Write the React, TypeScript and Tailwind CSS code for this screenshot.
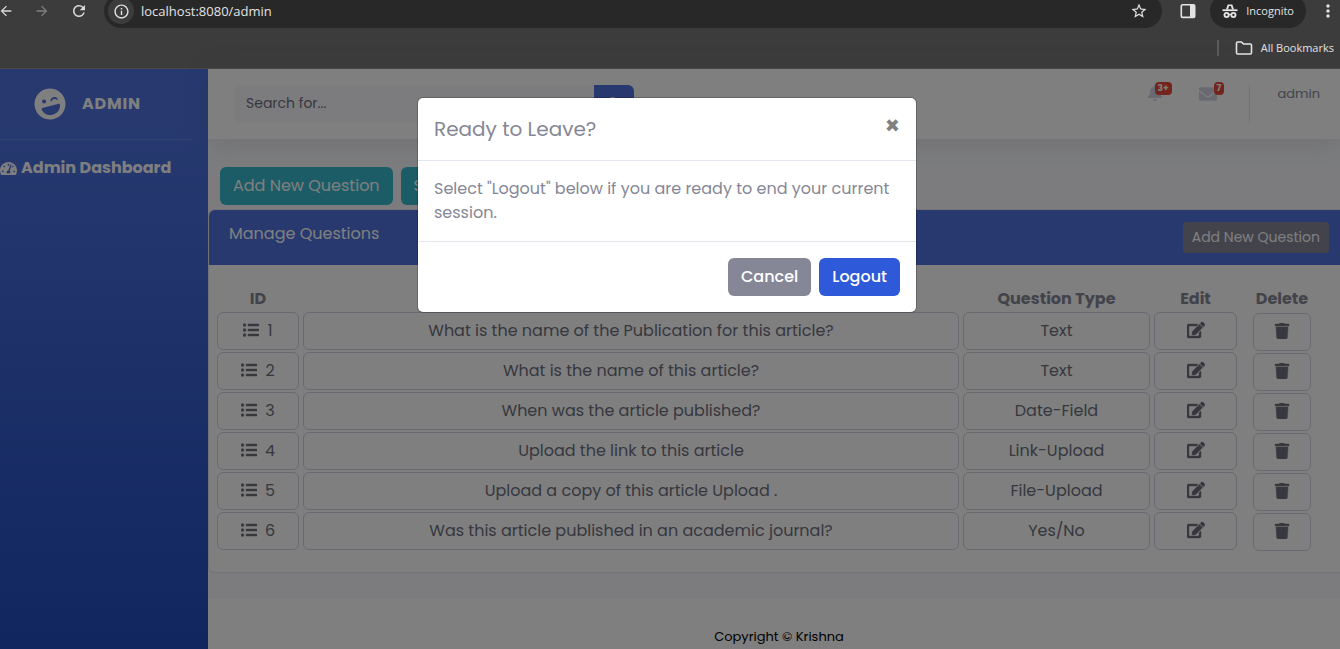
import type { ReactNode } from "react";
import {
  FaBell,
  FaEdit,
  FaEnvelope,
  FaLaughWink,
  FaListUl,
  FaSearch,
  FaTachometerAlt,
  FaTrash,
} from "react-icons/fa";
import {
  MdArrowBack,
  MdArrowForward,
  MdInfoOutline,
  MdMoreVert,
  MdRefresh,
  MdStarBorder,
} from "react-icons/md";

const questions = [
  { id: 1, text: "What is the name of the Publication for this article?", type: "Text" },
  { id: 2, text: "What is the name of this article?", type: "Text" },
  { id: 3, text: "When was the article published?", type: "Date-Field" },
  { id: 4, text: "Upload the link to this article", type: "Link-Upload" },
  { id: 5, text: "Upload a copy of this article Upload .", type: "File-Upload" },
  { id: 6, text: "Was this article published in an academic journal?", type: "Yes/No" },
];

function IncognitoIcon() {
  return (
    <svg width="16" height="16" viewBox="0 0 16 16" fill="none" stroke="currentColor" aria-hidden="true">
      <path d="M4.200 6.600V5.800L5.700 1.400H10.300L11.800 5.800V6.600H10L8.900 3H7.100L6 6.600Z" fill="currentColor" stroke="none" />
      <path d="M.5 7.200h15" strokeWidth="1.8" />
      <circle cx="4.600" cy="12" r="2.100" strokeWidth="1.900" />
      <circle cx="11.400" cy="12" r="2.100" strokeWidth="1.900" />
      <path d="M6.800 11.800c.8-.5 1.600-.5 2.400 0" strokeWidth="1.300" />
    </svg>
  );
}

function SidePanelIcon() {
  return (
    <svg width="16" height="16" viewBox="0 0 16 16" aria-hidden="true">
      <rect x="1.300" y="1.800" width="13.400" height="12.600" rx="1.200" fill="none" stroke="currentColor" strokeWidth="1.600" />
      <path d="M10 1.500h4v13.200h-4z" fill="currentColor" />
    </svg>
  );
}

function FolderIcon() {
  return (
    <svg width="18" height="14" viewBox="0 0 18 14" fill="none" stroke="currentColor" strokeWidth="1.600" aria-hidden="true">
      <path d="M1.500 2.200C1.500 1.500 2 1 2.700 1H6.500L8.500 3H15.300C16 3 16.500 3.500 16.500 4.200V11.800C16.500 12.500 16 13 15.300 13H2.700C2 13 1.500 12.500 1.500 11.800Z" />
    </svg>
  );
}

function BrowserBar() {
  return (
    <header className="h-[69px] shrink-0 overflow-hidden border-b border-[#4a4a4a] bg-[#3c3c3c] font-['Open_Sans',sans-serif] text-[#e3e3e3]">
      <div className="-mt-1.5 flex h-[34px] items-center">
        <div className="flex w-[104px] shrink-0 items-center gap-5 text-[#dadada]">
          <button aria-label="Back" className="-ml-0.5">
            <MdArrowBack size={16} />
          </button>
          <button aria-label="Forward" className="text-[#808080]">
            <MdArrowForward size={16} />
          </button>
          <button aria-label="Reload">
            <MdRefresh size={18} />
          </button>
        </div>
        <div className="flex h-full flex-1 items-center rounded-full bg-[#282828] pr-3.5 pl-1">
          <button aria-label="Site information" className="flex size-[26px] items-center justify-center rounded-full bg-[#3c3c3c]">
            <MdInfoOutline size={17} />
          </button>
          <input
            aria-label="Address"
            defaultValue="localhost:8080/admin"
            className="ml-[7px] min-w-0 flex-1 bg-transparent pt-0.5 text-[13px] outline-none"
          />
          <button aria-label="Bookmark this page">
            <MdStarBorder size={18} />
          </button>
        </div>
        <button aria-label="Side panel" className="mr-3.5 ml-[18px]">
          <SidePanelIcon />
        </button>
        <button className="flex h-full items-center gap-2 rounded-full bg-[#282828] px-3 text-[11px] font-medium">
          <IncognitoIcon />
          Incognito
        </button>
        <button aria-label="More" className="mr-0.5 ml-3 shrink-0">
          <MdMoreVert size={20} />
        </button>
      </div>
      <div className="flex h-10 items-center justify-end pr-1.5 text-[11px]">
        <span className="mr-4 h-4 w-0.5 bg-[#5c5c5c]" />
        <button className="flex items-center gap-2">
          <FolderIcon />
          All Bookmarks
        </button>
      </div>
    </header>
  );
}

function Sidebar() {
  return (
    <nav className="w-52 shrink-0 bg-linear-to-b from-[#4e73df] from-10% to-[#224abe] text-white">
      <a href="#admin" className="flex h-[70px] items-center gap-4 pl-[34px] text-base font-bold tracking-wider">
        <FaLaughWink size={32} className="-rotate-15" />
        ADMIN
      </a>
      <hr className="mr-4 border-white/15" />
      <a href="#dashboard" className="mt-4 flex items-center gap-1 font-bold whitespace-nowrap">
        <FaTachometerAlt size={17} />
        Admin Dashboard
      </a>
    </nav>
  );
}

function Badge({ children }: { children: ReactNode }) {
  return (
    <span className="absolute -top-[3px] rounded bg-[#e74a3b] px-[3px] text-[9px] leading-[13px] font-bold text-white">
      {children}
    </span>
  );
}

function Topbar() {
  return (
    <div className="relative flex h-[70px] justify-between bg-white pr-5 pl-[26px] shadow-[0_2px_28px_rgba(58,59,69,0.15)]">
      <form className="flex h-[38px] w-[400px] self-center">
        <input
          aria-label="Search for"
          placeholder="Search for..."
          className="min-w-0 flex-1 rounded-l-md bg-[#f8f9fc] px-3 pb-0.5 text-sm placeholder:text-[#6e707e]"
        />
        <button aria-label="Search" className="flex w-10 items-center justify-center rounded-r-md bg-[#4e73df] text-white">
          <FaSearch size={14} />
        </button>
      </form>
      <div className="flex pt-4 text-[#d1d3e2]">
        <button aria-label="Alerts" className="relative mr-7 flex h-4 w-6 self-start pl-2">
          <FaBell size={16} className="-ml-2 shrink-0" />
          <span className="-ml-2">
            <Badge>3+</Badge>
          </span>
        </button>
        <button aria-label="Messages" className="relative mr-6 flex h-4 w-[26px] self-start">
          <FaEnvelope size={18} className="shrink-0" />
          <span className="-ml-[3px]">
            <Badge>7</Badge>
          </span>
        </button>
        <span className="h-[38px] w-px bg-[#e3e6f0]" />
        <button className="ml-7 h-[18px] text-[13px] leading-[18px] text-[#858796]">admin</button>
      </div>
    </div>
  );
}

const box = "flex h-[38px] items-center justify-center rounded-md border border-[#d1d3e2] w-full";
const icon = "mb-0.5 stroke-current stroke-[14]";

function QuestionTable() {
  return (
    <table className="w-full table-fixed border-separate border-spacing-x-0.5 border-spacing-y-0 text-center text-[#6e707e]">
      <colgroup>
        <col className="w-[84px]" />
        <col />
        <col className="w-[189px]" />
        <col className="w-[85px]" />
        <col className="w-[84px]" />
      </colgroup>
      <thead>
        <tr className="h-[26px] font-bold text-[#858796]">
          <th className="pt-0.5">ID</th>
          <th className="pt-0.5" aria-label="Question" />
          <th className="pt-0.5">Question Type</th>
          <th className="pt-0.5">Edit</th>
          <th className="pt-0.5">Delete</th>
        </tr>
      </thead>
      <tbody>
        {questions.map((q) => (
          <tr key={q.id} className="h-10">
            <td className="px-px">
              <div className={`${box} gap-2`}>
                <FaListUl size={16} className={icon} />
                {q.id}
              </div>
            </td>
            <td className="px-px">
              <div className={box}>{q.text}</div>
            </td>
            <td className="px-px">
              <div className={box}>{q.type}</div>
            </td>
            <td className="px-px">
              <button aria-label={`Edit question ${q.id}`} className={box}>
                <FaEdit size={18} className={icon} />
              </button>
            </td>
            <td className="px-[13px] pt-0.5">
              <button aria-label={`Delete question ${q.id}`} className={box}>
                <FaTrash size={16} className={icon} />
              </button>
            </td>
          </tr>
        ))}
      </tbody>
    </table>
  );
}

function Content() {
  return (
    <main>
      <div className="flex gap-2 px-3 pt-7 pb-1 text-white">
        <button className="h-[38px] rounded-md bg-[#36b9cc] px-[13px]">Add New Question</button>
        <button className="h-[38px] rounded-md bg-[#36b9cc] px-[13px]">S</button>
      </div>
      <section className="rounded-l-md border border-r-0 border-[#e3e6f0] bg-white">
        <div className="flex h-[55px] justify-between rounded-tl-md bg-[#4e73df] px-5 pr-[11px] text-white">
          <h1 className="pt-3">Manage Questions</h1>
          <button className="mt-3 h-[31px] rounded bg-[#858796] px-[9px] pb-0.5 text-sm">Add New Question</button>
        </div>
        <div className="pt-5 pr-3.5 pb-[21px] pl-[5px]">
          <QuestionTable />
        </div>
      </section>
    </main>
  );
}

function LogoutDialog() {
  return (
    <div className="absolute inset-0 bg-black/50 pt-7 pr-1.5">
      <div
        role="dialog"
        aria-modal="true"
        aria-labelledby="logout-title"
        className="mx-auto w-[500px] rounded-md border border-black/20 bg-white bg-clip-padding text-[#858796]"
      >
        <div className="flex items-start justify-between border-b border-[#e3e6f0] p-4">
          <h2 id="logout-title" className="text-xl leading-[30px]">
            Ready to Leave?
          </h2>
          <button aria-label="Close" className="text-2xl leading-6 font-bold text-[#808080]">
            ×
          </button>
        </div>
        <p className="p-4">Select "Logout" below if you are ready to end your current session.</p>
        <div className="flex justify-end gap-2 border-t border-[#e3e6f0] p-4 font-medium text-white">
          <button className="h-[38px] rounded-md bg-[#858796] px-[13px]">Cancel</button>
          <button className="h-[38px] rounded-md bg-[#2e59d9] px-[13px]">Logout</button>
        </div>
      </div>
    </div>
  );
}

export default function App() {
  return (
    <div className="flex min-h-screen flex-col overflow-hidden">
      <BrowserBar />
      <div className="relative flex flex-1 font-['Poppins','Inter',sans-serif] text-base">
        <Sidebar />
        <div className="flex min-w-0 flex-1 flex-col bg-[#f8f9fc]">
          <Topbar />
          <Content />
          <footer className="mt-[26px] flex-1 bg-white pt-[30px] pl-2.5 text-center text-[13px] leading-4 text-black">
            Copyright © Krishna
          </footer>
        </div>
        <LogoutDialog />
      </div>
    </div>
  );
}
